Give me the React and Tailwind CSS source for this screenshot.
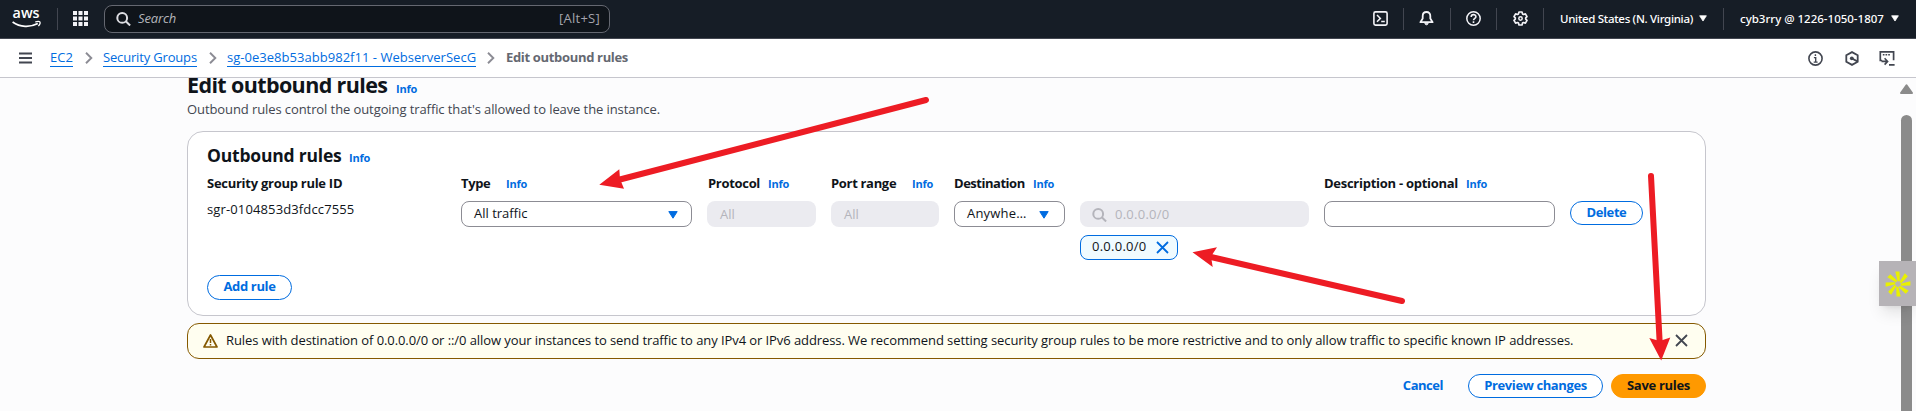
import React from "react";

const Info = ({ className = "" }) => (
  <a className={`text-[11px] font-bold tracking-[-0.2px] text-[#006ce0] ${className}`}>Info</a>
);

const Caret = ({ className }) => (
  <svg viewBox="0 0 10 8" className={className} fill="currentColor">
    <path d="M.8.6h8.4L5 7.2z" stroke="currentColor" strokeWidth="1" strokeLinejoin="round" />
  </svg>
);

const Magnifier = ({ className }) => (
  <svg viewBox="0 0 15 14" className={className} fill="none" stroke="currentColor" strokeWidth="2">
    <circle cx="6.2" cy="5.9" r="4.9" />
    <path d="M9.8 9.3l4.3 4.2" />
  </svg>
);

const Cross = ({ className }) => (
  <svg viewBox="0 0 13 13" className={className} fill="none" stroke="currentColor" strokeWidth="1.8">
    <path d="M1 1l11 11M12 1L1 12" />
  </svg>
);

const Chevron = ({ className }) => (
  <svg viewBox="0 0 8 12" className={`h-3 w-2 shrink-0 text-[#8c8c94] ${className}`} fill="none" stroke="currentColor" strokeWidth="1.9">
    <path d="M1 .8l5.3 5.2L1 11.2" />
  </svg>
);

const Divider = ({ className }) => <div className={`h-[22px] w-px bg-[#424650] ${className}`} />;

function TopBar() {
  return (
    <header className="flex h-[39px] items-center border-b border-[#424650] bg-[#161d26] pb-px text-white">
      <svg viewBox="0 0 29 20" className="ml-3 h-5 w-[29px] shrink-0 overflow-visible" fill="none">
        <text x="0.6" y="9" fill="#fff" className="text-[15px] font-semibold" textLength="27" lengthAdjust="spacingAndGlyphs">aws</text>
        <path d="M.6 13c7.5 5.4 17.5 5.600 25.200 1.500" stroke="#fff" strokeWidth="1.7" />
        <path d="M23.200 13c2-.7 4-.7 4.600-.2.5.6-.1 2.800-1.400 4.400" stroke="#fff" strokeWidth="1.3" />
      </svg>
      <Divider className="ml-4" />
      <svg viewBox="0 0 15 15" className="ml-[15px] h-[15px] w-[15px]" fill="#f3f3f7">
        {[0, 5.5, 11].map((y) => [0, 5.5, 11].map((x) => <rect key={x + "-" + y} x={x} y={y} width="4" height="4" />))}
      </svg>
      <div className="ml-4 flex h-7 w-[506px] items-center rounded-lg border border-[#656871] bg-[#0f141a] pr-[9px] pl-[11px]">
        <Magnifier className="h-3.5 w-[15px] text-[#dedee3]" />
        <span className="ml-[7px] text-[13px] tracking-[-0.15px] text-[#b4b4bb] italic">Search</span>
        <span className="ml-auto text-[13px] tracking-[0.26px] text-[#a4a4ad]">[Alt+S]</span>
      </div>
      <svg viewBox="0 0 15 15" className="ml-auto h-[15px] w-[15px]" fill="none" stroke="#f3f3f7" strokeWidth="1.6">
        <rect x=".9" y=".9" width="13.2" height="13.2" rx="1.6" />
        <path d="M4 4l3.4 3.4L4 10.8M8.2 10.6h3.6" strokeWidth="1.5" />
      </svg>
      <Divider className="ml-[15px]" />
      <svg viewBox="0 0 15 15" className="ml-[15px] h-[15px] w-[15px]" fill="none" stroke="#f3f3f7" strokeWidth="1.8" strokeLinejoin="round">
        <path d="M7.5 1C5 1 3.7 2.8 3.7 5v2.6L1.4 11.2h12.2l-2.3-3.6V5C11.3 2.8 10 1 7.5 1z" />
        <path d="M5.8 12.2c.2 2.2 3.2 2.2 3.4 0z" fill="#f3f3f7" strokeWidth=".8" />
      </svg>
      <Divider className="ml-4" />
      <svg viewBox="0 0 15 15" className="ml-[15px] h-[15px] w-[15px]" fill="none" stroke="#f3f3f7" strokeWidth="1.5">
        <circle cx="7.5" cy="7.5" r="6.7" />
        <path d="M5.2 5.9c0-3 4.7-2.9 4.7-.2 0 1.7-2.4 1.7-2.4 3.6M7.5 10.2v1.7" strokeWidth="1.6" />
      </svg>
      <Divider className="ml-[15px]" />
      <svg viewBox="0 0 15 15" className="ml-4 h-[15px] w-[15px]" fill="none" stroke="#f3f3f7" strokeWidth="1.7" strokeLinejoin="round">
        <path d="M6 1h3l.5 1.9 1 .6 1.9-.6 1.600 2.700-1.300 1.300v1.200L14 9.400l-1.600 2.700-1.900-.6-1 .6L9 14H6l-.5-1.900-1-.6-1.900.6L1 9.400l1.300-1.300V6.900L1 5.600l1.600-2.700 1.900.6 1-.6z" />
        <circle cx="7.5" cy="7.5" r="1.7" strokeWidth="1.5" />
      </svg>
      <Divider className="ml-[15px]" />
      <span className="ml-4 w-[133px] font-['Noto_Sans',sans-serif] text-[11.5px] font-medium tracking-[-0.3px] whitespace-nowrap">United States (N. Virginia)</span>
      <Caret className="ml-1.5 h-[7px] w-2" />
      <Divider className="ml-4" />
      <span className="ml-4 w-[144px] font-['Noto_Sans',sans-serif] text-[11.5px] font-medium whitespace-nowrap">cyb3rry @ 1226-1050-1807</span>
      <Caret className="mr-[17px] ml-[7px] h-[7px] w-2" />
    </header>
  );
}

const Crumb = ({ className, children }) => (
  <a className={`h-[17px] border-b border-[#006ce0] text-[13px] leading-[14px] whitespace-nowrap text-[#006ce0] ${className}`}>{children}</a>
);

function BreadcrumbBar() {
  return (
    <nav className="flex h-[39px] items-center border-b border-[#c6c6cd] bg-white">
      <svg viewBox="0 0 13 12" className="ml-[19px] h-3 w-[13px]" stroke="#424650" strokeWidth="1.9">
        <path d="M0 1.5h13M0 6h13M0 10.5h13" />
      </svg>
      <Crumb className="ml-[18px] w-[23px]">EC2</Crumb>
      <Chevron className="ml-3" />
      <Crumb className="ml-[10px] w-[94px] tracking-[-0.17px]">Security Groups</Crumb>
      <Chevron className="ml-3" />
      <Crumb className="ml-[10px] w-[249px] tracking-[0.03px]">sg-0e3e8b53abb982f11 - WebserverSecG</Crumb>
      <Chevron className="ml-[11px]" />
      <span className="ml-[11px] h-[17px] text-[13px] leading-[14px] font-bold tracking-[-0.33px] text-[#656871]">Edit outbound rules</span>
      <svg viewBox="0 0 15 15" className="ml-auto h-[15px] w-[15px]" fill="none" stroke="#424650" strokeWidth="1.6">
        <circle cx="7.5" cy="7.5" r="6.6" />
        <path d="M5.9 6.600h1.800v4.600M5.700 11.100h3.900M7.400 3.300v1.800" strokeWidth="1.4" />
      </svg>
      <svg viewBox="0 0 14 15" className="ml-[22px] h-[15px] w-3.5" fill="none" stroke="#424650" strokeWidth="1.8">
        <path d="M7 1.100l5.700 3.200v6.400L7 13.900l-5.700-3.200V4.300z" />
        <circle cx="6.800" cy="7.300" r="1.900" fill="#424650" stroke="none" />
        <path d="M7 7.500l5.400 2.900" strokeWidth="1.8" />
      </svg>
      <svg viewBox="0 0 16 15" className="mr-[21px] ml-5 h-[15px] w-4" fill="none" stroke="#424650" strokeWidth="1.7">
        <path d="M3.200 9.500H1.300V.9h13.300v8.400M10 13.900h5.600" />
        <path d="M3.800 3.700h7.600" strokeDasharray="1.7 1" strokeWidth="1.5" />
        <path d="M2.500 10.400h5.700M5.600 7.200l3 3.200-3 3.200" strokeWidth="1.6" />
      </svg>
    </nav>
  );
}

const Column = ({ label, labelClass = "", info = true, children }) => (
  <div>
    <div className="flex h-5 items-baseline leading-5 whitespace-nowrap">
      <span className={`text-[13px] font-bold ${labelClass}`}>{label}</span>
      {info && <Info />}
    </div>
    {children}
  </div>
);

const Select = ({ children, className, textClass = "" }) => (
  <div className={`mt-2 flex h-[26px] items-center justify-between rounded-lg border border-[#8c8c94] bg-white pl-[12px] ${className}`}>
    <span className={`text-[13px] ${textClass}`}>{children}</span>
    <Caret className="mt-px h-[8px] w-[10px] text-[#006ce0]" />
  </div>
);

const Disabled = ({ children }) => (
  <div className="mt-2 flex h-[26px] items-center rounded-lg bg-[#ebebf0] pt-px pl-[13px] text-[13px] text-[#b4b4bb]">{children}</div>
);

const Button = ({ className, children }) => (
  <button className={`flex items-center justify-center rounded-full border-[1.5px] pb-0.5 text-[13px] leading-5 font-bold whitespace-nowrap ${className}`}>{children}</button>
);

function RulesCard() {
  return (
    <section className="mt-3 h-[185px] rounded-2xl border border-[#c6c6cd] bg-white pt-[11px] pl-[19px]">
      <div className="flex h-6 items-baseline leading-6">
        <h2 className="w-[142px] text-[17.5px] font-bold tracking-[-0.2px] whitespace-nowrap">Outbound rules</h2>
        <Info />
      </div>
      <div className="mt-1.5 grid grid-cols-[239px_231px_109px_108px_111px_229px_231px_74px] gap-[15px]">
        <Column label="Security group rule ID" labelClass="tracking-[-0.27px]" info={false}>
          <div className="mt-1.5 text-[13px] leading-5 tracking-[0.13px]">sgr-0104853d3fdcc7555</div>
        </Column>
        <Column label="Type" labelClass="w-[45px] tracking-[-0.35px]">
          <Select className="pr-[13px]">All traffic</Select>
        </Column>
        <Column label="Protocol" labelClass="w-[61px] pl-px tracking-[-0.31px]">
          <Disabled>All</Disabled>
        </Column>
        <Column label="Port range" labelClass="w-[81px] tracking-[-0.32px]">
          <Disabled>All</Disabled>
        </Column>
        <Column label="Destination" labelClass="w-[79px] tracking-[-0.48px]">
          <Select className="pr-[15px]" textClass="tracking-[0.2px]">Anywhe…</Select>
        </Column>
        <Column label="" info={false}>
          <Disabled>
            <Magnifier className="-ml-px h-3.5 w-[15px]" />
            <span className="ml-2 tracking-[0.26px]">0.0.0.0/0</span>
          </Disabled>
          <div className="mt-2 flex h-[25px] w-[98px] items-center rounded-lg border border-[#006ce0] bg-[#f0fbff] pl-[11px]">
            <span className="pb-0.5 text-[13px] tracking-[0.26px]">0.0.0.0/0</span>
            <Cross className="ml-[9px] h-[13px] w-[13px] text-[#006ce0]" />
          </div>
        </Column>
        <Column label="Description - optional" labelClass="w-[142px] tracking-[-0.27px]">
          <div className="mt-2 h-[26px] rounded-lg border border-[#8c8c94] bg-white" />
        </Column>
        <Column label="" info={false}>
          <Button className="mt-2 h-6 w-[73px] border-[#006ce0] tracking-[-0.42px] text-[#006ce0]">Delete</Button>
        </Column>
      </div>
      <Button className="mt-[15px] h-[25px] w-[85px] border-[#006ce0] tracking-[-0.35px] text-[#006ce0]">
        <span className="-mt-px">Add rule</span>
      </Button>
    </section>
  );
}

function Warning() {
  return (
    <div className="mt-[7px] flex h-9 items-center rounded-xl border border-[#855900] bg-[#fffef0] pl-[15px]">
      <svg viewBox="0 0 15 14" className="h-3.5 w-[15px]" fill="none" stroke="#855900" strokeWidth="1.7" strokeLinejoin="round">
        <path d="M7.5 1L14 13H1z" />
        <path d="M7.5 5v4M7.5 10v1.5" strokeWidth="1.5" />
      </svg>
      <span className="ml-2 text-[13px] tracking-[-0.08px] whitespace-nowrap">
        Rules with destination of 0.0.0.0/0 or ::/0 allow your instances to send traffic to any IPv4 or IPv6 address. We recommend setting security group rules to be more restrictive and to only allow traffic to specific known IP addresses.
      </span>
      <Cross className="mr-[17px] mb-[1px] ml-auto h-[13px] w-[13px] text-[#424650]" />
    </div>
  );
}

function SideWidget() {
  return (
    <div className="absolute top-[261px] right-0 flex h-[45px] w-[37px] items-center justify-center bg-[#b6b3b7] shadow-lg">
      <svg viewBox="-13 -13 26 26" className="h-[26px] w-[26px]" fill="#e9f100">
        {[0, 45, 90, 135, 180, 225, 270, 315].map((a) => (
          <path key={a} transform={`rotate(${a})`} d="M-2.7-12.400L1.500-12.400 1.800-3-.3-2.400z" />
        ))}
      </svg>
    </div>
  );
}

function Arrows() {
  return (
    <svg viewBox="0 0 1916 411" className="pointer-events-none absolute inset-0 h-[411px] w-[1916px]" fill="#ed1c24" stroke="#ed1c24">
      <path d="M926 100L618 180M1402 301L1211 257M1651 176L1659.700 343" strokeWidth="6" strokeLinecap="round" fill="none" />
      <path stroke="none" d="M599.300 184.700L619.300 169.300 620 179 624 188.800z" />
      <path stroke="none" d="M1192.500 252.200L1217 247.300 1211 256.500 1212.700 267z" />
      <path stroke="none" d="M1661.200 360.500L1649.300 338 1659.700 341 1670.300 337.500z" />
    </svg>
  );
}

export default function App() {
  return (
    <div className="relative flex h-[411px] w-[1916px] flex-col overflow-hidden bg-[#fcfcfd] font-['Open_Sans','Noto_Sans',sans-serif] text-[#0f141a]">
      <TopBar />
      <BreadcrumbBar />
      <div className="flex min-h-0 flex-1 justify-between overflow-hidden">
        <main className="ml-[187px] w-[1519px]">
          <div className="-mt-[7px] flex h-7 items-baseline leading-7">
            <h1 className="w-[209px] text-[21.5px] font-bold tracking-[-0.62px] whitespace-nowrap">Edit outbound rules</h1>
            <Info />
          </div>
          <p className="text-[13px] leading-5 tracking-[-0.09px] text-[#424650]">Outbound rules control the outgoing traffic that's allowed to leave the instance.</p>
          <RulesCard />
          <Warning />
          <div className="mt-[15px] flex justify-end">
            <Button className="mr-6 h-6 border-transparent tracking-[-0.48px] text-[#006ce0]">Cancel</Button>
            <Button className="mr-2 h-6 w-[135px] border-[#006ce0] bg-white tracking-[-0.39px] text-[#006ce0]">Preview changes</Button>
            <Button className="h-6 w-[95px] border-[#ff9900] bg-[#ff9900] tracking-[-0.3px]">Save rules</Button>
          </div>
        </main>
        <div className="flex w-[17px] flex-col pt-1.5">
          <svg viewBox="0 0 13 10" className="ml-px h-[10px] w-[13px]" fill="#8b8b8b" stroke="#8b8b8b" strokeLinejoin="round" strokeWidth="2">
            <path d="M6.5 1.300L12 9H1z" />
          </svg>
          <div className="mt-[21px] ml-0.5 w-[11px] flex-1 rounded-t-full bg-[#8b8b8b]" />
        </div>
      </div>
      <SideWidget />
      <Arrows />
    </div>
  );
}
